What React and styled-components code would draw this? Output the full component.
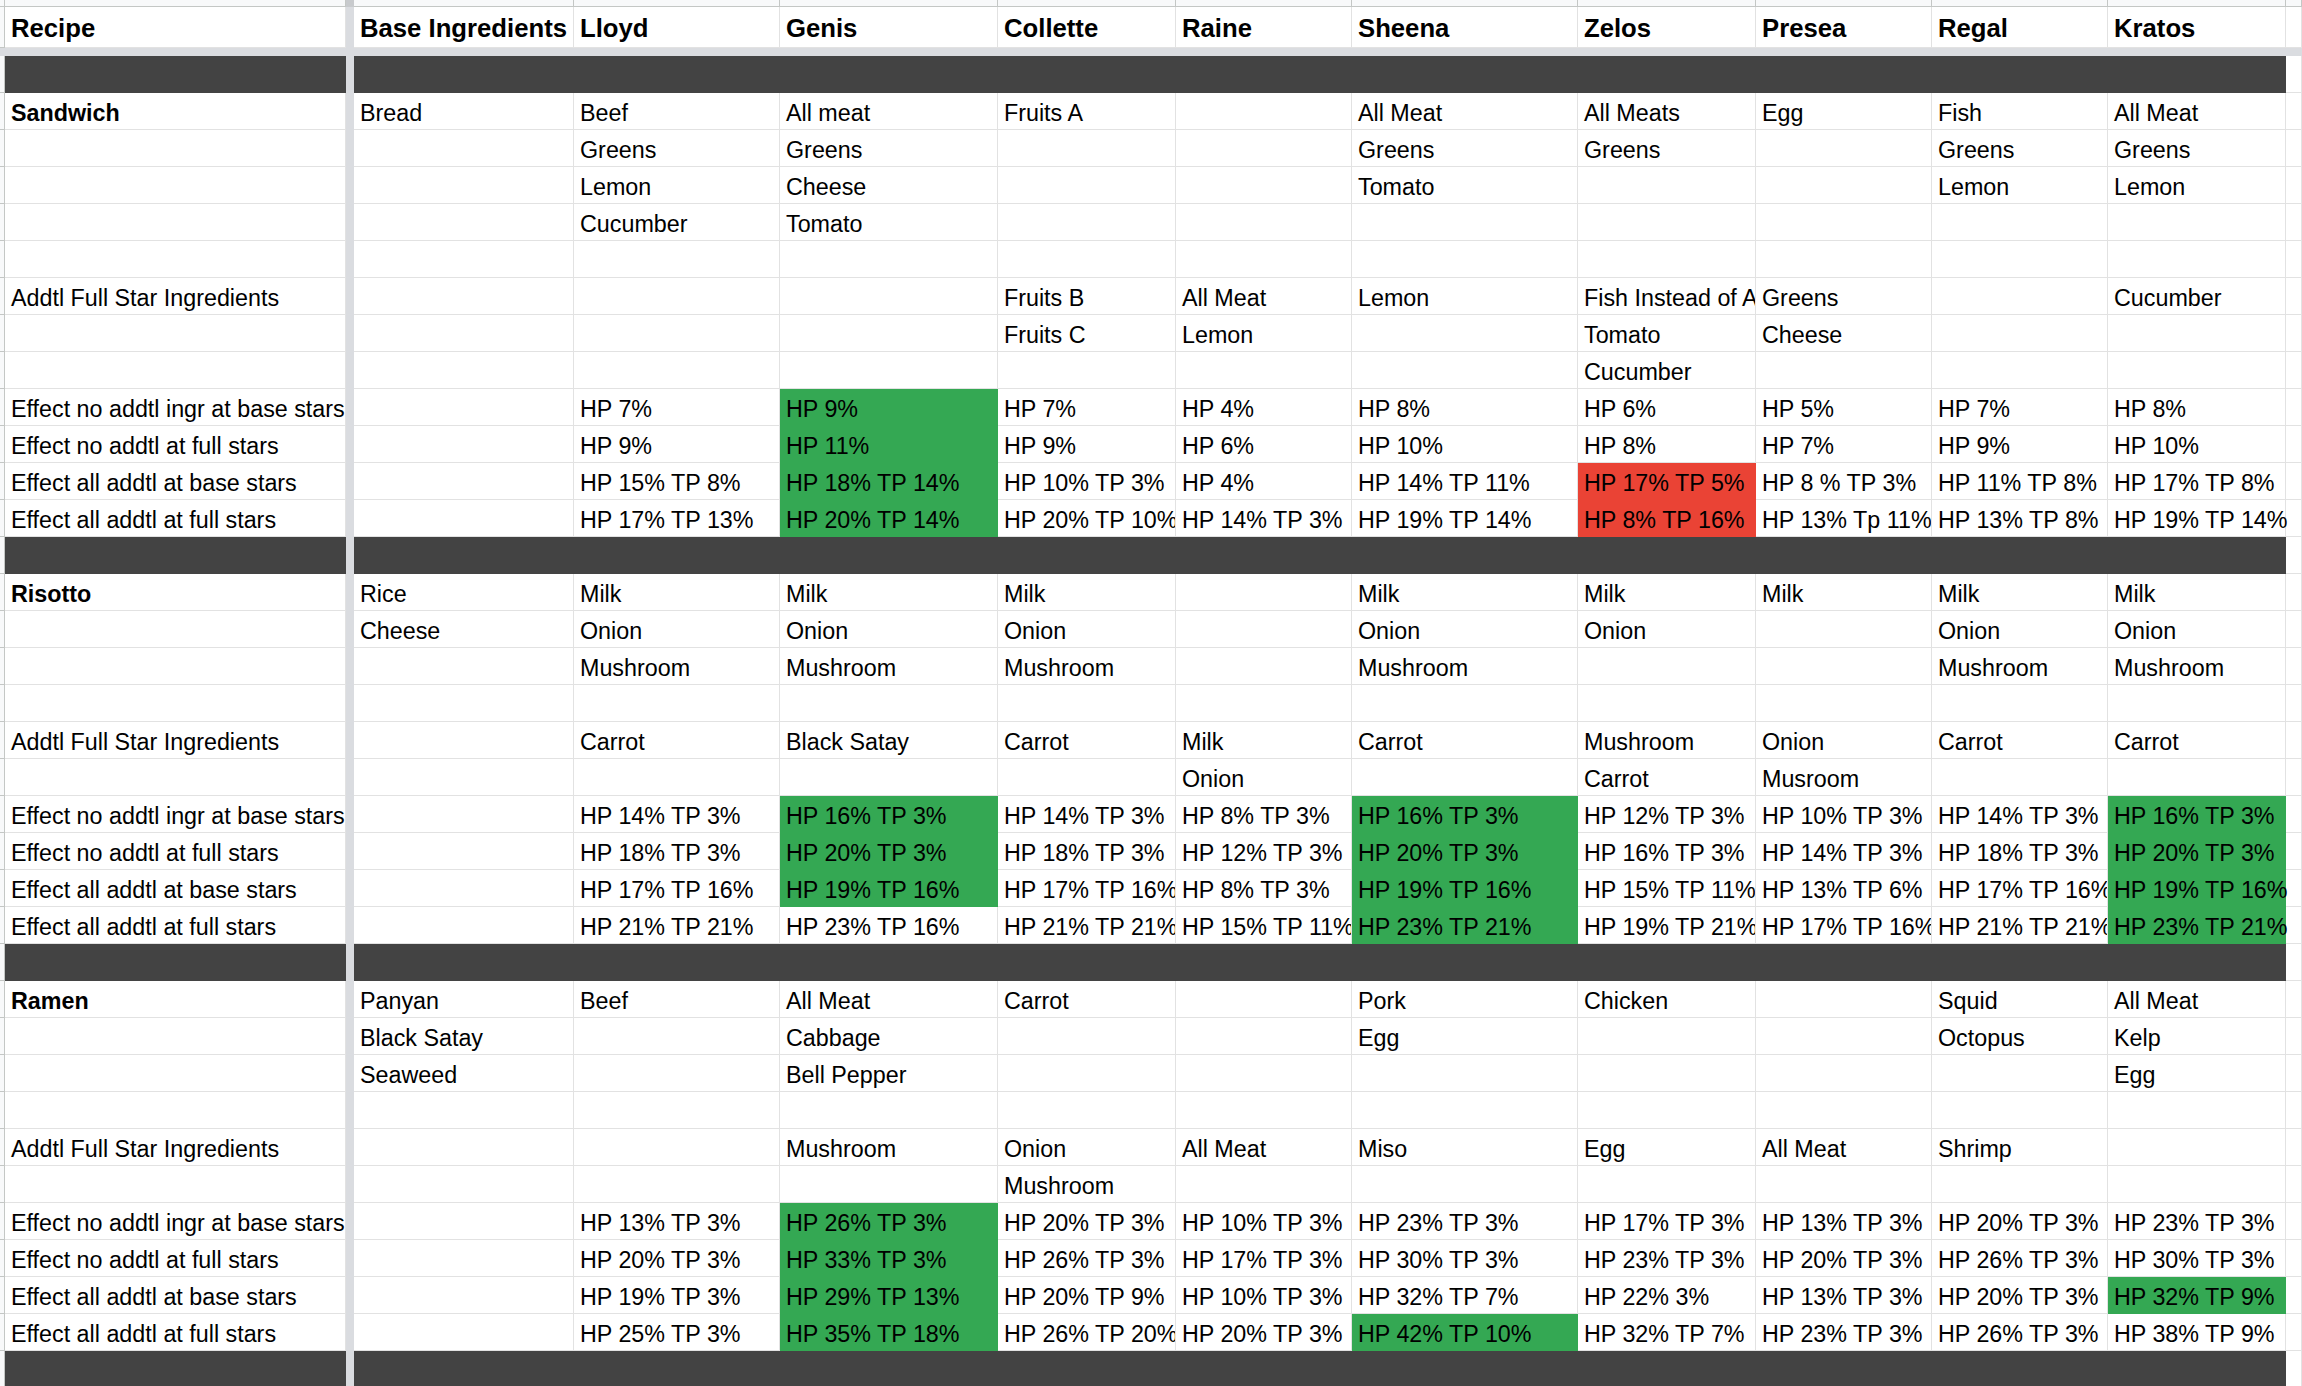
import React from 'react';
import styled, { createGlobalStyle } from 'styled-components';

const GlobalStyle = createGlobalStyle`
  html, body {
    margin: 0;
    padding: 0;
    background: #fff;
  }
  body {
    font-family: 'Liberation Sans', Arial, sans-serif;
    overflow: hidden;
  }
`;

// gutter | recipe | freeze | base | 10 characters | spare
const COLS = '5px 341px 8px 220px 206px 218px 178px 176px 226px 178px 176px 176px 178px 1fr';

const GRID = '#e2e2e2';
const FREEZE = '#dadce0';
const DARK = '#434343';
const FILLS = { g: '#34a853', r: '#ea4335' };

const Sheet = styled.div`
  width: 2302px;
  height: 1386px;
  overflow: hidden;
  background: #fff;
`;

const Row = styled.div`
  display: grid;
  grid-template-columns: ${COLS};
  height: ${(p) => p.$h}px;
`;

const Gutter = styled.div`
  box-sizing: border-box;
  background: ${(p) => (p.$band ? FREEZE : '#f8f9fa')};
  border-right: 1px solid #c4c7c5;
  border-bottom: 1px solid ${(p) => (p.$band ? FREEZE : '#c4c7c5')};
`;

const Freeze = styled.div`
  background: ${(p) => p.$color || FREEZE};
`;

const ColLetter = styled.div`
  box-sizing: border-box;
  background: #f8f9fa;
  border-right: 1px solid #c4c7c5;
  border-bottom: 1px solid #c4c7c5;
`;

const Band = styled.div`
  grid-column: 1 / -1;
  background: ${FREEZE};
`;

const Cell = styled.div`
  box-sizing: border-box;
  min-width: 0;
  display: flex;
  align-items: flex-end;
  padding: 0 0 ${(p) => (p.$head ? 4 : 2)}px 6px;
  background: ${(p) => (p.$fill ? FILLS[p.$fill] : 'transparent')};
  border-right: 1px solid ${(p) => (p.$fill ? FILLS[p.$fill] : GRID)};
  border-bottom: 1px solid ${(p) => (p.$fill ? FILLS[p.$fill] : GRID)};
  color: #000;
  font-size: ${(p) => (p.$head ? 25.7 : 23.3)}px;
  font-weight: ${(p) => (p.$bold || p.$head ? 700 : 400)};
  white-space: nowrap;
  overflow: ${(p) => (p.$clip ? 'hidden' : 'visible')};
`;

const DarkCell = styled.div`
  background: ${DARK};
`;

const SpareCell = styled.div`
  box-sizing: border-box;
  border-right: 1px solid ${GRID};
  border-bottom: 1px solid ${GRID};
`;

const g = (t) => ({ t, f: 'g' });
const r = (t) => ({ t, f: 'r' });

const HEADERS = ['Recipe', 'Base Ingredients', 'Lloyd', 'Genis', 'Collette', 'Raine', 'Sheena', 'Zelos', 'Presea', 'Regal', 'Kratos'];

const E1 = 'Effect no addtl ingr at base stars';
const E2 = 'Effect no addtl at full stars';
const E3 = 'Effect all addtl at base stars';
const E4 = 'Effect all addtl at full stars';
const ADD = 'Addtl Full Star Ingredients';

const sections = [
  [
    ['Sandwich', 'Bread', 'Beef', 'All meat', 'Fruits A', '', 'All Meat', 'All Meats', 'Egg', 'Fish', 'All Meat'],
    ['', '', 'Greens', 'Greens', '', '', 'Greens', 'Greens', '', 'Greens', 'Greens'],
    ['', '', 'Lemon', 'Cheese', '', '', 'Tomato', '', '', 'Lemon', 'Lemon'],
    ['', '', 'Cucumber', 'Tomato', '', '', '', '', '', '', ''],
    ['', '', '', '', '', '', '', '', '', '', ''],
    [ADD, '', '', '', 'Fruits B', 'All Meat', 'Lemon', 'Fish Instead of All Meat', 'Greens', '', 'Cucumber'],
    ['', '', '', '', 'Fruits C', 'Lemon', '', 'Tomato', 'Cheese', '', ''],
    ['', '', '', '', '', '', '', 'Cucumber', '', '', ''],
    [E1, '', 'HP 7%', g('HP 9%'), 'HP 7%', 'HP 4%', 'HP 8%', 'HP 6%', 'HP 5%', 'HP 7%', 'HP 8%'],
    [E2, '', 'HP 9%', g('HP 11%'), 'HP 9%', 'HP 6%', 'HP 10%', 'HP 8%', 'HP 7%', 'HP 9%', 'HP 10%'],
    [E3, '', 'HP 15% TP 8%', g('HP 18% TP 14%'), 'HP 10% TP 3%', 'HP 4%', 'HP 14% TP 11%', r('HP 17% TP 5%'), 'HP 8 % TP 3%', 'HP 11% TP 8%', 'HP 17% TP 8%'],
    [E4, '', 'HP 17% TP 13%', g('HP 20% TP 14%'), 'HP 20% TP 10%', 'HP 14% TP 3%', 'HP 19% TP 14%', r('HP 8% TP 16%'), 'HP 13% Tp 11%', 'HP 13% TP 8%', 'HP 19% TP 14%'],
  ],
  [
    ['Risotto', 'Rice', 'Milk', 'Milk', 'Milk', '', 'Milk', 'Milk', 'Milk', 'Milk', 'Milk'],
    ['', 'Cheese', 'Onion', 'Onion', 'Onion', '', 'Onion', 'Onion', '', 'Onion', 'Onion'],
    ['', '', 'Mushroom', 'Mushroom', 'Mushroom', '', 'Mushroom', '', '', 'Mushroom', 'Mushroom'],
    ['', '', '', '', '', '', '', '', '', '', ''],
    [ADD, '', 'Carrot', 'Black Satay', 'Carrot', 'Milk', 'Carrot', 'Mushroom', 'Onion', 'Carrot', 'Carrot'],
    ['', '', '', '', '', 'Onion', '', 'Carrot', 'Musroom', '', ''],
    [E1, '', 'HP 14% TP 3%', g('HP 16% TP 3%'), 'HP 14% TP 3%', 'HP 8% TP 3%', g('HP 16% TP 3%'), 'HP 12% TP 3%', 'HP 10% TP 3%', 'HP 14% TP 3%', g('HP 16% TP 3%')],
    [E2, '', 'HP 18% TP 3%', g('HP 20% TP 3%'), 'HP 18% TP 3%', 'HP 12% TP 3%', g('HP 20% TP 3%'), 'HP 16% TP 3%', 'HP 14% TP 3%', 'HP 18% TP 3%', g('HP 20% TP 3%')],
    [E3, '', 'HP 17% TP 16%', g('HP 19% TP 16%'), 'HP 17% TP 16%', 'HP 8% TP 3%', g('HP 19% TP 16%'), 'HP 15% TP 11%', 'HP 13% TP 6%', 'HP 17% TP 16%', g('HP 19% TP 16%')],
    [E4, '', 'HP 21% TP 21%', 'HP 23% TP 16%', 'HP 21% TP 21%', 'HP 15% TP 11%', g('HP 23% TP 21%'), 'HP 19% TP 21%', 'HP 17% TP 16%', 'HP 21% TP 21%', g('HP 23% TP 21%')],
  ],
  [
    ['Ramen', 'Panyan', 'Beef', 'All Meat', 'Carrot', '', 'Pork', 'Chicken', '', 'Squid', 'All Meat'],
    ['', 'Black Satay', '', 'Cabbage', '', '', 'Egg', '', '', 'Octopus', 'Kelp'],
    ['', 'Seaweed', '', 'Bell Pepper', '', '', '', '', '', '', 'Egg'],
    ['', '', '', '', '', '', '', '', '', '', ''],
    [ADD, '', '', 'Mushroom', 'Onion', 'All Meat', 'Miso', 'Egg', 'All Meat', 'Shrimp', ''],
    ['', '', '', '', 'Mushroom', '', '', '', '', '', ''],
    [E1, '', 'HP 13% TP 3%', g('HP 26% TP 3%'), 'HP 20% TP 3%', 'HP 10% TP 3%', 'HP 23% TP 3%', 'HP 17% TP 3%', 'HP 13% TP 3%', 'HP 20% TP 3%', 'HP 23% TP 3%'],
    [E2, '', 'HP 20% TP 3%', g('HP 33% TP 3%'), 'HP 26% TP 3%', 'HP 17% TP 3%', 'HP 30% TP 3%', 'HP 23% TP 3%', 'HP 20% TP 3%', 'HP 26% TP 3%', 'HP 30% TP 3%'],
    [E3, '', 'HP 19% TP 3%', g('HP 29% TP 13%'), 'HP 20% TP 9%', 'HP 10% TP 3%', 'HP 32% TP 7%', 'HP 22% 3%', 'HP 13% TP 3%', 'HP 20% TP 3%', g('HP 32% TP 9%')],
    [E4, '', 'HP 25% TP 3%', g('HP 35% TP 18%'), 'HP 26% TP 20%', 'HP 20% TP 3%', g('HP 42% TP 10%'), 'HP 32% TP 7%', 'HP 23% TP 3%', 'HP 26% TP 3%', 'HP 38% TP 9%'],
  ],
];

const norm = (c) => (typeof c === 'string' ? { t: c } : c);

const DataRow = ({ cells }) => {
  const list = cells.map(norm);
  const isRecipe = (i) => i === 0 && ['Sandwich', 'Risotto', 'Ramen'].includes(list[0].t);
  const renderCell = (c, i) => {
    const next = list[i + 1];
    const clip = i === 0 || (next && (next.t || next.f));
    return (
      <Cell key={i} $fill={c.f} $bold={isRecipe(i)} $clip={clip}>
        {c.t}
      </Cell>
    );
  };
  return (
    <Row $h={37}>
      <Gutter />
      {renderCell(list[0], 0)}
      <Freeze />
      {list.slice(1).map((c, i) => renderCell(c, i + 1))}
      <SpareCell />
    </Row>
  );
};

const DarkRow = () => (
  <Row $h={37}>
    <Gutter />
    <DarkCell />
    <Freeze />
    {Array.from({ length: 10 }).map((_, i) => (
      <DarkCell key={i} />
    ))}
    <SpareCell />
  </Row>
);

const App = () => {
  return (
    <Sheet>
      <GlobalStyle />
      <Row $h={7}>
        <ColLetter />
        <ColLetter />
        <Freeze $color="#c8cacd" />
        {Array.from({ length: 11 }).map((_, i) => (
          <ColLetter key={i} />
        ))}
      </Row>
      <Row $h={41}>
        <Gutter />
        <Cell $head $clip>{HEADERS[0]}</Cell>
        <Freeze />
        {HEADERS.slice(1).map((h) => (
          <Cell key={h} $head $clip>
            {h}
          </Cell>
        ))}
        <SpareCell />
      </Row>
      <Row $h={8}>
        <Band />
      </Row>
      <DarkRow />
      {sections.map((rows, si) => (
        <React.Fragment key={si}>
          {rows.map((cells, ri) => (
            <DataRow key={ri} cells={cells} />
          ))}
          <DarkRow />
        </React.Fragment>
      ))}
    </Sheet>
  );
};

export default App;
